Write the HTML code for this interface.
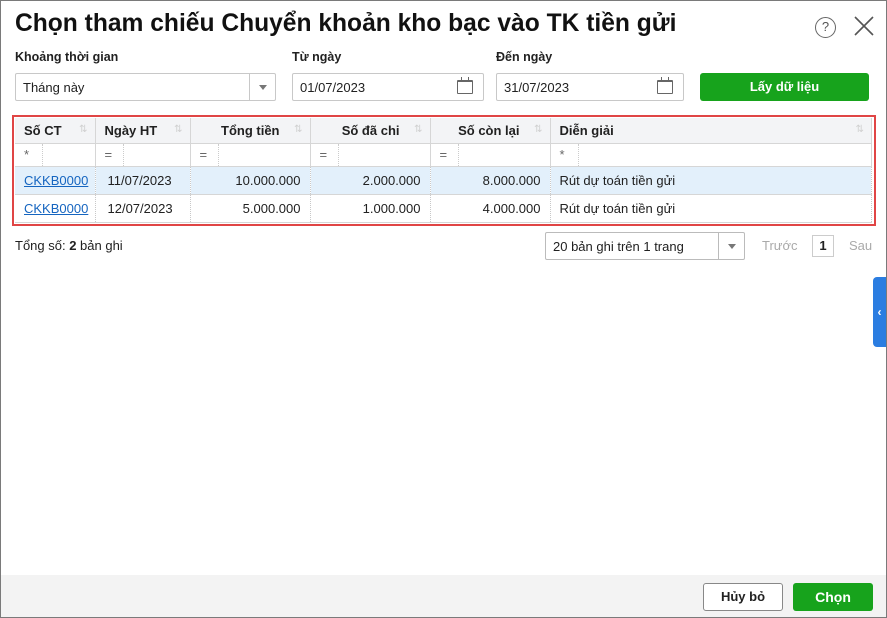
<!DOCTYPE html>
<html><head><meta charset="utf-8"><style>
*{box-sizing:border-box;margin:0;padding:0}
body{width:887px;height:618px;overflow:hidden;background:#fff;font-family:"Liberation Sans","DejaVu Sans",sans-serif;font-size:13px;color:#212121;position:relative}
.frame{position:absolute;left:0;top:0;width:887px;height:618px;border:1px solid #7a7a7a}
.a{position:absolute}
.title{left:15px;top:10px;font-size:24.6px;font-weight:bold;color:#111;letter-spacing:0px}
.lbl{font-size:12.5px;font-weight:bold;top:50px}
.inp{border:1px solid #c8c8c8;border-radius:2px;height:28px;top:73px;padding:6px 7px;font-size:13px}
.cal{position:absolute;right:10px;top:6px;width:16px;height:14px;border:1px solid #666;border-top-width:2px;border-radius:1px}
.cal:before,.cal:after{content:"";position:absolute;top:-5px;width:1px;height:4px;background:#666}
.cal:before{left:3px}.cal:after{right:3px}
.btn-g{background:#17a31c;color:#fff;font-weight:bold;border-radius:3px;text-align:center}
table{border-collapse:collapse;table-layout:fixed;position:absolute;left:15px;top:118px;width:857px}
td{height:24px;border-right:1px dotted #c8c8c8;border-bottom:1px solid #d6d6d6;padding:0 9px;white-space:nowrap;overflow:hidden}
tr.h td{background:#f3f4f6;font-weight:bold;height:25px;position:relative;border-right:1px solid #d6d6d6}
tr.f td{height:23px;padding:0;border-right:1px solid #d6d6d6}
tr.d td{height:28px}
tr.sel td{background:#e3f0fb}
.s{position:absolute;right:7px;top:6px;color:#d0d0d0;font-size:10px;font-weight:normal}
.r{text-align:right}
.fl{display:flex;height:22px}
.fl span{width:28px;border-right:1px dotted #ccc;padding-left:9px;line-height:22px;color:#666}
a{color:#1565c0}
</style></head><body>
<div class="frame"></div>
<div class="a title">Chọn tham chiếu Chuyển khoản kho bạc vào TK tiền gửi</div>
<div class="a" style="left:815px;top:17px;width:21px;height:21px;border:1.5px solid #666;border-radius:50%;text-align:center;font-size:13px;line-height:18px;color:#555">?</div>
<svg class="a" style="left:854px;top:16px" width="20" height="20" viewBox="0 0 20 20"><path d="M1 1L19 19M19 1L1 19" stroke="#555" stroke-width="1.6"/></svg>

<div class="a lbl" style="left:15px">Khoảng thời gian</div>
<div class="a lbl" style="left:292px">Từ ngày</div>
<div class="a lbl" style="left:496px">Đến ngày</div>
<div class="a inp" style="left:15px;width:261px">Tháng này<div style="position:absolute;right:0;top:0;width:26px;height:26px;border-left:1px solid #c8c8c8"><div style="position:absolute;left:9px;top:11px;border-left:4px solid transparent;border-right:4px solid transparent;border-top:5px solid #777"></div></div></div>
<div class="a inp" style="left:292px;width:192px">01/07/2023<div class="cal"></div></div>
<div class="a inp" style="left:496px;width:188px">31/07/2023<div class="cal"></div></div>
<div class="a btn-g" style="left:700px;top:73px;width:169px;height:28px;line-height:28px">Lấy dữ liệu</div>

<div class="a" style="left:12px;top:115px;width:864px;height:111px;border:2px solid #e04545"></div>
<table>
<colgroup><col style="width:80px"><col style="width:95px"><col style="width:120px"><col style="width:120px"><col style="width:120px"><col></colgroup>
<tr class="h"><td>Số CT<span class="s">⇅</span></td><td>Ngày HT<span class="s">⇅</span></td><td class="r" style="padding-right:30px">Tổng tiền<span class="s">⇅</span></td><td class="r" style="padding-right:30px">Số đã chi<span class="s">⇅</span></td><td class="r" style="padding-right:30px">Số còn lại<span class="s">⇅</span></td><td>Diễn giải<span class="s">⇅</span></td></tr>
<tr class="f"><td><div class="fl"><span>*</span></div></td><td><div class="fl"><span>=</span></div></td><td><div class="fl"><span>=</span></div></td><td><div class="fl"><span>=</span></div></td><td><div class="fl"><span>=</span></div></td><td><div class="fl"><span>*</span></div></td></tr>
<tr class="d sel"><td><a style="text-decoration:underline">CKKB0000</a></td><td style="padding-left:12px">11/07/2023</td><td class="r">10.000.000</td><td class="r">2.000.000</td><td class="r">8.000.000</td><td>Rút dự toán tiền gửi</td></tr>
<tr class="d"><td><a style="text-decoration:underline">CKKB0000</a></td><td style="padding-left:12px">12/07/2023</td><td class="r">5.000.000</td><td class="r">1.000.000</td><td class="r">4.000.000</td><td>Rút dự toán tiền gửi</td></tr>
</table>

<div class="a" style="left:15px;top:238px">Tổng số: <b>2</b> bản ghi</div>
<div class="a" style="left:545px;top:232px;width:200px;height:28px;border:1px solid #bbb;border-radius:2px;padding:6px 7px">20 bản ghi trên 1 trang<div style="position:absolute;right:0;top:0;width:26px;height:26px;border-left:1px solid #bbb"><div style="position:absolute;left:9px;top:11px;border-left:4px solid transparent;border-right:4px solid transparent;border-top:5px solid #777"></div></div></div>
<div class="a" style="left:762px;top:238px;color:#aaa">Trước</div>
<div class="a" style="left:812px;top:235px;width:22px;height:22px;border:1px solid #ccc;text-align:center;line-height:20px;font-weight:bold">1</div>
<div class="a" style="left:849px;top:238px;color:#aaa">Sau</div>

<div class="a" style="left:873px;top:277px;width:13px;height:70px;background:#2b7de1;border-radius:4px 0 0 4px;color:#fff;font-size:12px;line-height:70px;text-align:center;font-weight:bold">‹</div>

<div class="a" style="left:1px;top:575px;width:885px;height:42px;background:#f3f3f3"></div>
<div class="a" style="left:703px;top:583px;width:80px;height:28px;border:1px solid #888;border-radius:3px;background:#fff;text-align:center;line-height:26px;font-weight:bold">Hủy bỏ</div>
<div class="a btn-g" style="left:793px;top:583px;width:80px;height:28px;line-height:28px;font-size:14px">Chọn</div>
</body></html>
